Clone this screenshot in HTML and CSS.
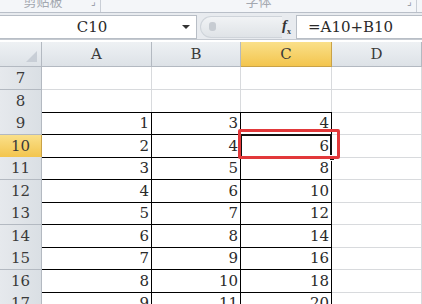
FILE: index.html
```html
<!DOCTYPE html>
<html lang="zh-CN">
<head>
  <meta charset="UTF-8" />
  <title>Excel - C10</title>
  <link rel="stylesheet" href="styles.css">
</head>
<body>
  <div class="ribbon">
    <div class="group clip">
      <span class="group-label">剪贴板</span>
      <span class="launcher">⌟</span>
    </div>
    <div class="group font">
      <span class="group-label">字体</span>
      <span class="launcher">⌟</span>
    </div>
  </div>

  <div class="formula-bar">
    <div class="name-box">
      <span class="name">C10</span>
      <span class="arrow"></span>
    </div>
    <div class="grip"><span class="dot"></span></div>
    <div class="fx"><i>f</i><sub>x</sub></div>
    <div class="formula">=A10+B10</div>
  </div>

  <div class="sheet">
    <div class="row head">
      <div class="corner"></div>
      <div class="col">A</div>
      <div class="col">B</div>
      <div class="col active">C</div>
      <div class="col">D</div>
    </div>
    <div class="row">
      <div class="rh">7</div><div class="c"></div><div class="c"></div><div class="c"></div><div class="c"></div>
    </div>
    <div class="row">
      <div class="rh">8</div><div class="c edge"></div><div class="c edge"></div><div class="c edge"></div><div class="c"></div>
    </div>
    <div class="row">
      <div class="rh">9</div><div class="c b">1</div><div class="c b">3</div><div class="c b">4</div><div class="c"></div>
    </div>
    <div class="row">
      <div class="rh active">10</div><div class="c b">2</div><div class="c b">4</div>
      <div class="c b sel">6
        <span class="cursor"></span>
        <span class="handle"></span>
        <span class="mark"></span>
      </div>
      <div class="c"></div>
    </div>
    <div class="row">
      <div class="rh">11</div><div class="c b">3</div><div class="c b">5</div><div class="c b">8</div><div class="c"></div>
    </div>
    <div class="row">
      <div class="rh">12</div><div class="c b">4</div><div class="c b">6</div><div class="c b">10</div><div class="c"></div>
    </div>
    <div class="row">
      <div class="rh">13</div><div class="c b">5</div><div class="c b">7</div><div class="c b">12</div><div class="c"></div>
    </div>
    <div class="row">
      <div class="rh">14</div><div class="c b">6</div><div class="c b">8</div><div class="c b">14</div><div class="c"></div>
    </div>
    <div class="row">
      <div class="rh">15</div><div class="c b">7</div><div class="c b">9</div><div class="c b">16</div><div class="c"></div>
    </div>
    <div class="row">
      <div class="rh">16</div><div class="c b">8</div><div class="c b">10</div><div class="c b">18</div><div class="c"></div>
    </div>
    <div class="row">
      <div class="rh">17</div><div class="c b">9</div><div class="c b">11</div><div class="c b">20</div><div class="c"></div>
    </div>
  </div>
</body>
</html>
```

FILE: styles.css
```css
* {
  box-sizing: border-box;
}

body {
  margin: 0;
  width: 422px;
  height: 304px;
  overflow: hidden;
  background: #fff;
  font-family: "DejaVu Serif", "Noto Sans CJK SC", serif;
  color: #2a2a2a;
}

/* ribbon strip (cut off at the top) */
.ribbon {
  display: flex;
  height: 13px;
  background: #f4f6f9;
  border-bottom: 1px solid #b9bfc8;
  overflow: hidden;
}

.group {
  display: flex;
  align-items: flex-start;
  justify-content: center;
  position: relative;
  border-right: 1px solid #c9ced6;
  height: 12px;
}

.group.clip {
  width: 101px;
}

.group.font {
  width: 316px;
}

.group-label {
  font-family: "Noto Sans CJK SC", sans-serif;
  font-size: 13px;
  line-height: 2px;
  color: #a3a8b0;
  margin-right: 14px;
}

.group.font .group-label {
  margin-right: 0;
}

.launcher {
  position: absolute;
  right: 4px;
  top: -4px;
  font-size: 10px;
  color: #8a9099;
}

/* formula bar */
.formula-bar {
  display: flex;
  height: 27px;
  padding-top: 2px;
  background: #e8ebef;
  border-bottom: 1px solid #c4c9d0;
}

.name-box {
  display: flex;
  align-items: center;
  width: 197px;
  height: 24px;
  background: #fff;
  border: 1px solid #b8bec6;
  border-left: none;
}

.name {
  flex: 1;
  text-align: center;
  font-size: 15px;
  padding-left: 2px;
}

.arrow {
  width: 0;
  height: 0;
  margin-right: 6px;
  border-left: 4px solid transparent;
  border-right: 4px solid transparent;
  border-top: 4px solid #333;
}

.grip {
  width: 82px;
  height: 22px;
  margin: 1px 0 0 3px;
  border-radius: 11px 0 0 11px;
  background: linear-gradient(#f1f3f5, #dfe3e7);
  border: 1px solid #cfd4da;
  border-right: none;
  padding: 5px 0 0 8px;
}

.dot {
  display: block;
  width: 7px;
  height: 9px;
  border-radius: 3px;
  background: #c7ccd2;
}

.fx {
  width: 12px;
  font-family: "Liberation Serif", serif;
  font-size: 15px;
  font-weight: bold;
  color: #333;
  padding-top: 2px;
}

.fx sub {
  font-size: 8px;
}

.formula {
  flex: 1;
  height: 24px;
  margin-left: 2px;
  background: #fff;
  border: 1px solid #b8bec6;
  border-right: none;
  padding: 2px 0 0 11px;
  font-size: 15px;
}

/* sheet */
.sheet {
  margin-top: 2px;
}

.row {
  display: grid;
  grid-template-columns: 42px 110px 89px 91px 90px;
  height: 22.5px;
}

.row.head {
  height: 25px;
}

.corner,
.col,
.rh {
  background: linear-gradient(#eef1f4, #dde2e7);
  border-right: 1px solid #b3b9c1;
  border-bottom: 1px solid #b3b9c1;
  color: #3a3a3a;
  font-size: 15px;
  text-align: center;
}

.corner {
  position: relative;
}

.corner::after {
  content: "";
  position: absolute;
  right: 4px;
  bottom: 4px;
  border-left: 11px solid transparent;
  border-bottom: 11px solid #c8ced6;
}

.col {
  line-height: 24px;
}

.rh {
  line-height: 22px;
  background: linear-gradient(90deg, #e6e9ed, #dadfe4);
}

.col.active,
.rh.active {
  background: linear-gradient(#fae08a, #f3c54e);
  border-color: #c9a247;
}

.c {
  border-right: 1px solid #d8dadd;
  border-bottom: 1px solid #d8dadd;
  text-align: right;
  padding-right: 2px;
  font-size: 15px;
  line-height: 22px;
}

.c.edge {
  border-bottom-color: #000;
}

.c.b {
  border-right-color: #000;
  border-bottom-color: #000;
}

/* active cell */
.sel {
  position: relative;
}

.cursor {
  position: absolute;
  left: -1px;
  top: -1px;
  right: -1px;
  bottom: -1px;
  border: 2px solid #111;
}

.handle {
  position: absolute;
  right: -4px;
  bottom: -4px;
  width: 6px;
  height: 6px;
  background: #111;
  border: 1px solid #fff;
}

.mark {
  position: absolute;
  left: -3px;
  top: -6px;
  width: 102px;
  height: 30px;
  border: 3px solid #e2383a;
  border-radius: 2px;
}
```
